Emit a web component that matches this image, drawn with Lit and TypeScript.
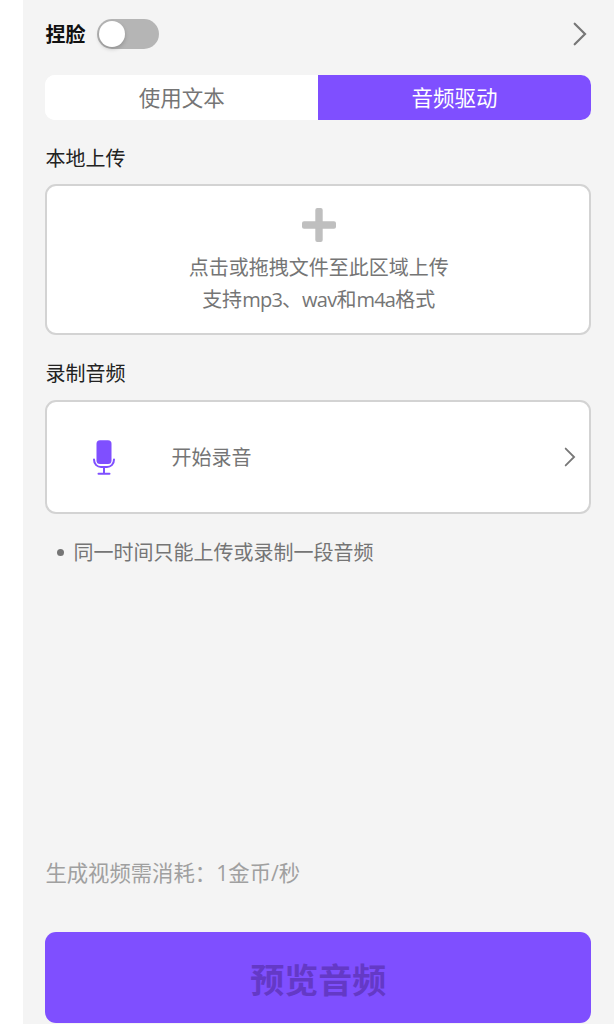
import { LitElement, html, css, svg } from "lit";
import { customElement, property, state } from "lit/decorators.js";

@customElement("chevron-icon")
class ChevronIcon extends LitElement {
  static styles = css`
    :host { display: block; }
    .icon { display: block; width: 100%; height: 100%; overflow: visible; }
  `;
  render() {
    return html`<svg class="icon" viewBox="0 0 12 22" fill="none" stroke="#777" stroke-width="2.2" stroke-linecap="round">
      ${svg`<path d="M0.7 0.7 L11 11 L0.7 21.3" />`}
    </svg>`;
  }
}

@customElement("toggle-switch")
class ToggleSwitch extends LitElement {
  @property({ type: Boolean, reflect: true }) on = false;
  static styles = css`
    :host { display: block; }
    .track {
      display: flex; align-items: center; box-sizing: border-box;
      width: 62px; height: 30px; padding: 0 2px; border: 0;
      border-radius: 15px; background: #b5b5b5;
    }
    .knob {
      width: 26px; height: 26px; border-radius: 50%; background: #fff;
      box-shadow: 0 2px 4px rgba(0, 0, 0, 0.2);
    }
    :host([on]) .track { justify-content: flex-end; background: #7f4fff; }
  `;
  render() {
    return html`<button class="track" role="switch" aria-checked=${this.on}
      @click=${() => (this.on = !this.on)}><span class="knob"></span></button>`;
  }
}

@customElement("app-root")
class AppRoot extends LitElement {
  @state() private tab = "audio";

  static styles = css`
    :host {
      display: block; height: 1024px; overflow: hidden; background: #fff;
      font-family: "Open Sans", "Noto Sans CJK SC", sans-serif;
      font-size: 20px; line-height: 32px; color: #757575;
    }
    .panel {
      display: flex; flex-direction: column; box-sizing: border-box;
      height: 100%; margin-left: 23px; padding: 18px 23px 1.5px 22.4px;
      background: #f4f4f4;
    }
    .header { display: flex; align-items: center; height: 32px; }
    .title { font-weight: 700; color: #111; margin-right: 11.6px; padding-top: 1px; }
    .more { width: 12px; height: 22px; margin: 0 5px 0 auto; }
    .tabs {
      display: grid; grid-template-columns: 1fr 1fr; height: 45.5px;
      margin-top: 24.5px; border-radius: 10px; overflow: hidden; background: #fff;
      flex: none;
    }
    .tab {
      border: 0; padding: 1px 0 0; background: #fff; color: #757575;
      font: inherit; font-size: 21.5px;
    }
    .tab.active { background: #7f4fff; color: #fff; }
    .label { color: #222; height: 32px; flex: none; }
    .label.local { margin: 23px 0 9px; }
    .label.record { margin: 23px 0 10px; }
    .card {
      box-sizing: border-box; border: 2px solid #d3d3d3; border-radius: 11px;
      background: #fff; flex: none;
    }
    .upload {
      display: flex; flex-direction: column; align-items: center;
      height: 150.5px; padding: 22px 0 0 1px;
    }
    .plus { width: 34px; height: 34px; margin-bottom: 10px; }
    .latin { letter-spacing: -0.75px; }
    .recorder {
      display: flex; align-items: center; height: 114px; padding: 0 14px 0 45.6px;
    }
    .mic { width: 22px; height: 35px; margin: 2px 56.6px 0 0; }
    .caption { padding-top: 2px; }
    .go { width: 10px; height: 18px; margin-left: auto; }
    .notes { list-style: none; margin: 23px 0 0; padding: 0 0 0 11.2px; }
    .note { display: flex; align-items: center; }
    .dot { width: 7px; height: 7px; border-radius: 50%; background: #757575; margin-right: 10px; }
    .cost { margin: auto 0 43px; font-size: 21.35px; color: #a0a0a0; }
    .submit {
      height: 90.5px; flex: none; border: 0; border-radius: 11px; padding: 5px 0 0;
      background: #7f4fff; color: #6439c6; font: inherit; font-size: 34px; font-weight: 700;
    }
  `;

  private tabButton(id: string, text: string) {
    return html`<button class="tab ${this.tab === id ? "active" : ""}"
      @click=${() => (this.tab = id)}>${text}</button>`;
  }

  render() {
    return html`
      <main class="panel">
        <header class="header">
          <span class="title">捏脸</span>
          <toggle-switch></toggle-switch>
          <chevron-icon class="more"></chevron-icon>
        </header>
        <nav class="tabs">
          ${this.tabButton("text", "使用文本")}${this.tabButton("audio", "音频驱动")}
        </nav>
        <div class="label local">本地上传</div>
        <section class="card upload">
          <svg class="plus" viewBox="0 0 34 34" fill="#bfbfbf">
            <rect x="13.3" width="7.4" height="34" rx="2" />
            <rect y="13.3" width="34" height="7.4" rx="2" />
          </svg>
          <div>点击或拖拽文件至此区域上传</div>
          <div>支持<span class="latin">mp3</span>、<span class="latin">wav</span>和<span class="latin">m4a</span>格式</div>
        </section>
        <div class="label record">录制音频</div>
        <section class="card recorder">
          <svg class="mic" viewBox="0 0 22 35" fill="none" stroke="#7f4fff" stroke-width="2" stroke-linecap="round">
            <rect x="3.5" y="0.3" width="15" height="23.7" rx="3.5" fill="#7f4fff" stroke="none" />
            <path d="M1 19.5 C1 24.5 4.5 27 8 27 H14 C17.5 27 21 24.5 21 19.5 M11 27 V33.5 M5.5 33.8 H16.5" />
          </svg>
          <span class="caption">开始录音</span>
          <chevron-icon class="go"></chevron-icon>
        </section>
        <ul class="notes">
          <li class="note"><span class="dot"></span>同一时间只能上传或录制一段音频</li>
        </ul>
        <div class="cost">生成视频需消耗：1金币/秒</div>
        <button class="submit">预览音频</button>
      </main>
    `;
  }
}
